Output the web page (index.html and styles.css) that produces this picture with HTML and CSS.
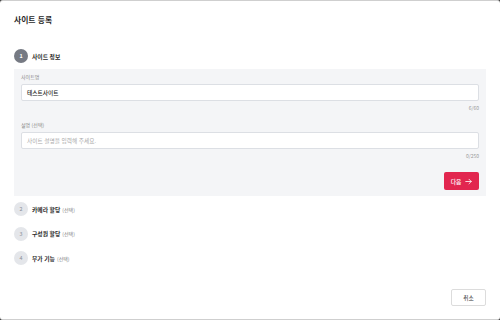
FILE: index.html
```html
<!DOCTYPE html>
<html lang="ko">
<head>
<meta charset="utf-8">
<title>사이트 등록</title>
<link rel="stylesheet" href="styles.css">
</head>
<body>
<div class="modal">
  <div class="header"><h1 class="title">사이트 등록</h1></div>
  <div class="steps">
    <div class="step active">
      <span class="num">1</span><span class="step-name">사이트 정보</span>
    </div>
    <div class="panel">
      <div class="field">
        <div class="label">사이트명</div>
        <div class="input">테스트사이트</div>
        <div class="counter">6/60</div>
      </div>
      <div class="field second">
        <div class="label">설명 (선택)</div>
        <div class="input placeholder">사이트 설명을 입력해 주세요.</div>
        <div class="counter">0/250</div>
      </div>
      <div class="actions">
        <button class="btn-next">다음
          <svg class="arrow" width="7" height="7" viewBox="0 0 14 14" fill="none" stroke="#fff" stroke-width="1.6" stroke-linecap="round" stroke-linejoin="round"><path d="M1.5 7h11M8 2.5 12.5 7 8 11.5"/></svg>
        </button>
      </div>
    </div>
    <div class="step"><span class="num">2</span><span class="step-name">카메라 할당</span><span class="opt">(선택)</span></div>
    <div class="step"><span class="num">3</span><span class="step-name">구성원 할당</span><span class="opt">(선택)</span></div>
    <div class="step"><span class="num">4</span><span class="step-name">부가 기능</span><span class="opt">(선택)</span></div>
  </div>
  <div class="footer"><button class="btn-cancel">취소</button></div>
</div>
</body>
</html>
```
FILE: styles.css
```css
html, body {
  margin: 0;
  padding: 0;
  background: #3c3c3c;
}
body {
  font-family: "Noto Sans CJK KR", "Noto Sans", sans-serif;
  color: #222;
}
.modal {
  width: 500px;
  height: 320px;
  box-sizing: border-box;
  background: #fff;
  border-top: 1px solid #cfcfcf;
  border-bottom: 1px solid #cfcfcf;
  border-radius: 3px;
  display: flex;
  flex-direction: column;
}
.header {
  padding: 12px 14px 0;
}
.title {
  margin: 0;
  font-size: 7.8px;
  line-height: 14px;
  font-weight: 700;
  color: #1f1f1f;
}
.steps {
  margin-top: 22px;
  padding: 0 14px;
  display: flex;
  flex-direction: column;
}
.step {
  display: flex;
  align-items: center;
  height: 14px;
  gap: 4px;
  font-size: 5.8px;
}
.step + .step {
  margin-top: 10.5px;
}
.panel + .step {
  margin-top: 6px;
}
.num {
  width: 14px;
  height: 14px;
  border-radius: 50%;
  background: #e4e6ea;
  color: #8a8f98;
  font-size: 5.4px;
  display: flex;
  align-items: center;
  justify-content: center;
  flex: none;
}
.step.active .num {
  background: #767a83;
  color: #fff;
  font-weight: 700;
}
.step-name {
  font-weight: 700;
  color: #2a2a2a;
}
.opt {
  font-size: 5px;
  color: #7e7e7e;
  margin-left: -2px;
}
.panel {
  margin-top: 6px;
  background: #f4f5f7;
  padding: 4px 7px 6px;
  display: flex;
  flex-direction: column;
}
.field.second {
  margin-top: 10px;
}
.label {
  font-size: 5px;
  line-height: 8px;
  color: #888;
  margin-bottom: 3px;
}
.input {
  height: 17px;
  box-sizing: border-box;
  background: #fff;
  border: 1px solid #dcdfe4;
  border-radius: 2px;
  padding: 0 5px;
  display: flex;
  align-items: center;
  font-size: 5.7px;
  font-weight: 500;
  color: #222;
}
.input.placeholder {
  color: #a8a8a8;
  font-weight: 400;
}
.counter {
  margin-top: 3px;
  font-size: 5px;
  line-height: 7px;
  color: #9a9a9a;
  text-align: right;
}
.actions {
  margin-top: 13px;
  display: flex;
  justify-content: flex-end;
}
.btn-next {
  width: 35px;
  height: 18px;
  border: none;
  border-radius: 2px;
  background: #e2264f;
  color: #fff;
  font-family: inherit;
  font-size: 5.8px;
  font-weight: 500;
  padding: 0;
  display: flex;
  align-items: center;
  justify-content: center;
  gap: 4px;
}
.arrow {
  display: block;
}
.footer {
  margin-top: auto;
  padding: 0 14px 13px;
  display: flex;
  justify-content: flex-end;
}
.btn-cancel {
  width: 35px;
  height: 17px;
  box-sizing: border-box;
  background: #fff;
  border: 1px solid #dcdcdc;
  border-radius: 2px;
  font-family: inherit;
  font-size: 5.7px;
  color: #333;
  padding: 0;
}
```
